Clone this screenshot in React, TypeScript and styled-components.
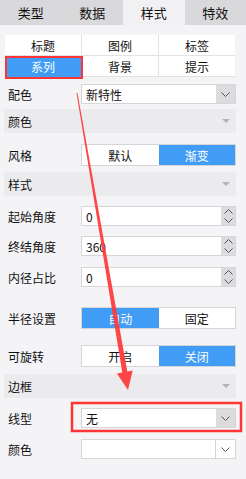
import React from "react";
import styled, { createGlobalStyle } from "styled-components";

const Global = createGlobalStyle`
  html, body { margin: 0; padding: 0; background: #f4f4f6; }
  body { font-family: "Noto Sans CJK SC", "Noto Sans", sans-serif; color: #111; }
`;

const Page = styled.div`
  position: relative;
  width: 246px;
  height: 479px;
  overflow: hidden;
  background: #f4f4f6;
`;

const Tabs = styled.div`
  display: flex;
  height: 25px;
  background: #d9d9dc;
`;

const Tab = styled.div<{ $active?: boolean }>`
  flex: 1;
  display: flex;
  align-items: center;
  justify-content: center;
  font-size: 13px;
  background: ${(p) => (p.$active ? "#f1f1f3" : "transparent")};
`;

const Content = styled.div`
  padding: 10px 10px 0 4px;
  display: flex;
  flex-direction: column;
`;

const Grid = styled.div`
  display: grid;
  grid-template-columns: repeat(3, 1fr);
  gap: 1px;
  margin: 0 1px;
  background: #e2e2e4;
`;

const Cell = styled.div<{ $on?: boolean }>`
  height: ${(p) => (p.$on ? 21 : 20)}px;
  display: flex;
  align-items: center;
  justify-content: center;
  font-size: 12px;
  background: ${(p) => (p.$on ? "#409cf5" : "#fff")};
  color: ${(p) => (p.$on ? "#fff" : "#111")};
`;

const Row = styled.div<{ $top: number }>`
  display: grid;
  grid-template-columns: 77px 1fr;
  align-items: center;
  margin-top: ${(p) => p.$top}px;
`;

const Label = styled.div`
  padding-left: 4px;
  font-size: 12px;
`;

const Field = styled.div<{ $h?: number }>`
  display: flex;
  height: ${(p) => p.$h ?? 20}px;
  box-sizing: border-box;
  border: 1px solid #d6d6d8;
  background: #fff;
`;

const FieldText = styled.div`
  flex: 1;
  display: flex;
  align-items: center;
  padding-left: 4px;
  font-size: 12px;
`;

const ArrowBox = styled.div<{ $plain?: boolean }>`
  width: 19px;
  display: flex;
  align-items: center;
  justify-content: center;
  background: ${(p) => (p.$plain ? "#fff" : "#dcdcde")};
  border-left: ${(p) => (p.$plain ? "1px solid #d6d6d8" : "none")};
`;

const Spin = styled.div`
  width: 14px;
  display: flex;
  flex-direction: column;
  align-items: center;
  justify-content: space-around;
  background: #dcdcde;
`;

const Header = styled.div<{ $top: number }>`
  display: flex;
  align-items: center;
  justify-content: space-between;
  height: 24px;
  padding: 0 6px 0 4px;
  margin-top: ${(p) => p.$top}px;
  background: #ebebed;
  font-size: 12px;
`;

const Tri = styled.div`
  width: 0;
  height: 0;
  border-left: 4px solid transparent;
  border-right: 4px solid transparent;
  border-top: 4px solid #b4b4b6;
`;

const Toggle = styled.div`
  display: flex;
  height: 22px;
  box-sizing: border-box;
  border: 1px solid #d6d6d8;
  background: #fff;
`;

const Half = styled.div<{ $on?: boolean }>`
  flex: 1;
  display: flex;
  align-items: center;
  justify-content: center;
  font-size: 12px;
  background: ${(p) => (p.$on ? "#409cf5" : "#fff")};
  color: ${(p) => (p.$on ? "#fff" : "#111")};
`;

const Overlay = styled.svg`
  position: absolute;
  left: 0;
  top: 0;
  pointer-events: none;
`;

const Chevron = ({ up }: { up?: boolean }) => (
  <svg width="9" height="5" viewBox="0 0 9 5">
    <path
      d={up ? "M0.5 4.5 L4.5 0.5 L8.5 4.5" : "M0.5 0.5 L4.5 4.5 L8.5 0.5"}
      fill="none"
      stroke="#555"
      strokeWidth="1"
    />
  </svg>
);

const Select = ({ value, plain }: { value: string; plain?: boolean }) => (
  <Field>
    <FieldText>{value}</FieldText>
    <ArrowBox $plain={plain}>
      <Chevron />
    </ArrowBox>
  </Field>
);

const Spinner = ({ value }: { value: string }) => (
  <Field>
    <FieldText>{value}</FieldText>
    <Spin>
      <Chevron up />
      <Chevron />
    </Spin>
  </Field>
);

const Switch = ({ a, b, on }: { a: string; b: string; on: 0 | 1 }) => (
  <Toggle>
    <Half $on={on === 0}>{a}</Half>
    <Half $on={on === 1}>{b}</Half>
  </Toggle>
);

export default function App() {
  return (
    <Page>
      <Global />
      <Tabs>
        <Tab>类型</Tab>
        <Tab>数据</Tab>
        <Tab $active>样式</Tab>
        <Tab>特效</Tab>
      </Tabs>
      <Content>
        <Grid>
          <Cell>标题</Cell>
          <Cell>图例</Cell>
          <Cell>标签</Cell>
          <Cell $on>系列</Cell>
          <Cell>背景</Cell>
          <Cell>提示</Cell>
        </Grid>
        <Row $top={7}>
          <Label>配色</Label>
          <Select value="新特性" />
        </Row>
        <Header $top={5}>
          颜色
          <Tri />
        </Header>
        <Row $top={11}>
          <Label>风格</Label>
          <Switch a="默认" b="渐变" on={1} />
        </Row>
        <Header $top={6}>
          样式
          <Tri />
        </Header>
        <Row $top={10}>
          <Label>起始角度</Label>
          <Spinner value="0" />
        </Row>
        <Row $top={10}>
          <Label>终结角度</Label>
          <Spinner value="360" />
        </Row>
        <Row $top={11}>
          <Label>内径占比</Label>
          <Spinner value="0" />
        </Row>
        <Row $top={20}>
          <Label>半径设置</Label>
          <Switch a="自动" b="固定" on={0} />
        </Row>
        <Row $top={16}>
          <Label>可旋转</Label>
          <Switch a="开启" b="关闭" on={1} />
        </Row>
        <Header $top={7}>
          边框
          <Tri />
        </Header>
        <Row $top={10}>
          <Label>线型</Label>
          <Select value="无" />
        </Row>
        <Row $top={11}>
          <Label>颜色</Label>
          <Select value="" plain />
        </Row>
      </Content>
      <Overlay width="246" height="479" viewBox="0 0 246 479">
        <rect x="6" y="57" width="76" height="21" fill="none" stroke="#ff3434" strokeWidth="2" />
        <rect x="72" y="403" width="169" height="28" fill="none" stroke="#ff3434" strokeWidth="2.5" />
        <polygon
          points="77.5,92.9 76.5,93.1 122.3,372.4 116.9,373.4 128,390 132.7,370.6 127.3,371.6"
          fill="#ff3c3c"
          fillOpacity="0.95"
        />
      </Overlay>
    </Page>
  );
}
